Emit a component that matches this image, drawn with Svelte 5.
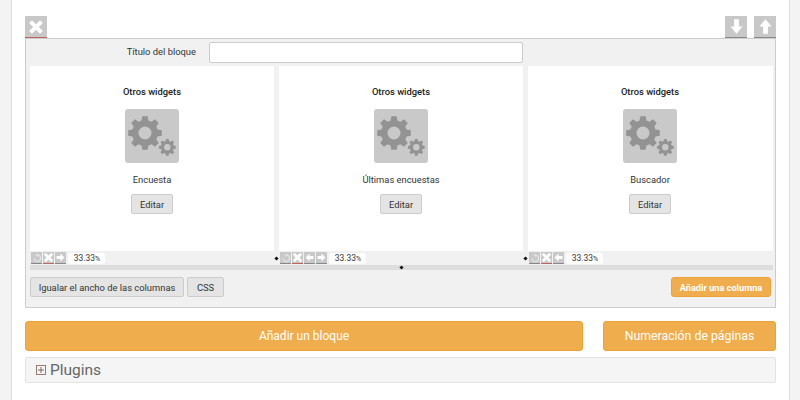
<script>
  // Page-builder block editor: one block with three widget columns.
  const columns = [
    { name: 'Encuesta', tools: ['undo', 'close', 'right'], dot: false },
    { name: 'Últimas encuestas', tools: ['undo', 'close', 'left', 'right'], dot: true },
    { name: 'Buscador', tools: ['undo', 'close', 'left'], dot: true }
  ];

  const arrows = {
    right: 'M2 5h5V2l5 5-5 5V9H2z',
    left: 'M12 5H7V2L2 7l5 5V9h5z',
    down: 'M5 1h4v6h3l-5 6-5-6h3z',
    up: 'M5 13h4V7h3L7 1 2 7h3z'
  };

  // Gear outline: teeth around a ring, with the hole cut by evenodd.
  function gear(cx, cy, outer, inner, hole, teeth) {
    let d = '';
    const step = (Math.PI * 2) / teeth;
    for (let i = 0; i < teeth; i++) {
      const a = i * step - Math.PI / 2;
      const pts = [
        [inner, a - step * 0.34],
        [outer, a - step * 0.2],
        [outer, a + step * 0.2],
        [inner, a + step * 0.34]
      ];
      for (const [r, t] of pts) {
        const x = (cx + r * Math.cos(t)).toFixed(2);
        const y = (cy + r * Math.sin(t)).toFixed(2);
        d += (d ? 'L' : 'M') + x + ' ' + y;
      }
    }
    d += `ZM${cx - hole} ${cy}a${hole} ${hole} 0 1 0 ${hole * 2} 0a${hole} ${hole} 0 1 0 ${-hole * 2} 0Z`;
    return d;
  }
  const gearPath = gear(20, 24, 17, 13, 6.5, 8) + gear(42.3, 38.3, 8.5, 6.5, 3.2, 8);
</script>

{#snippet xIcon(size)}
  <svg width={size} height={size} viewBox="0 0 14 14" aria-hidden="true">
    <path d="M1 3.5 3.5 1 7 4.5 10.500 1 13 3.500 9.500 7 13 10.500 10.500 13 7 9.500 3.500 13 1 10.500 4.500 7z" fill="#fff" />
  </svg>
{/snippet}

{#snippet arrow(name, size)}
  <svg width={size} height={size} viewBox="0 0 14 14" aria-hidden="true">
    <path d={arrows[name]} fill="#fff" />
  </svg>
{/snippet}

<div class="page">
  <main class="content">
    <div class="block-tools">
      <button class="tool danger">{@render xIcon(16)}</button>
      <div class="move">
        <button class="tool">{@render arrow('down', 17)}</button>
        <button class="tool">{@render arrow('up', 17)}</button>
      </div>
    </div>

    <section class="block">
      <div class="title-row">
        <label for="block-title">Título del bloque</label>
        <input id="block-title" type="text" />
      </div>

      <div class="columns">
        {#each columns as col}
          <div class="column">
            <div class="widget">
              <h4>Otros widgets</h4>
              <div class="widget-icon">
                <svg width="54" height="54" viewBox="0 0 54 54" aria-hidden="true">
                  <path d={gearPath} fill="#939393" fill-rule="evenodd" />
                </svg>
              </div>
              <p>{col.name}</p>
              <button class="edit">Editar</button>
            </div>
            <div class="col-tools">
              {#if col.dot}<span class="dot"></span>{/if}
              {#each col.tools as t}
                <span class="mini" class:danger={t === 'close'}>
                  {#if t === 'close'}
                    {@render xIcon(11)}
                  {:else if t === 'undo'}
                    <svg width="10" height="10" viewBox="0 0 14 14" aria-hidden="true">
                      <path d="M8 3A4.500 4.500 0 1 1 3 7.500" fill="none" stroke="#e6e6e6" stroke-width="1.600" />
                      <path d="M8 0.500v5L5 3z" fill="#e6e6e6" />
                    </svg>
                  {:else}
                    {@render arrow(t, 11)}
                  {/if}
                </span>
              {/each}
              <span class="width">33.33<small>%</small></span>
            </div>
          </div>
        {/each}
      </div>

      <div class="slider"><span class="dot"></span></div>

      <div class="actions">
        <button class="plain equalize">Igualar el ancho de las columnas</button>
        <button class="plain css">CSS</button>
        <button class="orange small">Añadir una columna</button>
      </div>
    </section>

    <div class="main-actions">
      <button class="orange big grow">Añadir un bloque</button>
      <button class="orange big pages">Numeración de páginas</button>
    </div>

    <div class="plugins">
      <svg width="10" height="10" viewBox="0 0 10 10" aria-hidden="true">
        <rect x="0.5" y="0.5" width="9" height="9" fill="none" stroke="#9a7a6c" />
        <path d="M2 5h6M5 2v6" stroke="#7a6a64" />
      </svg>
      <span>Plugins</span>
    </div>
  </main>
</div>

<style>
  :global(body) {
    margin: 0;
    background: #f3f3f3;
    font-family: Roboto, "Liberation Sans", Arial, sans-serif;
  }

  .page {
    width: 800px;
    height: 400px;
    overflow: hidden;
    box-sizing: border-box;
    padding: 0 10px 0 11px;
  }

  .content {
    height: 400px;
    box-sizing: border-box;
    background: #fff;
    border-left: 1px solid #ddd;
    border-right: 1px solid #ddd;
    padding: 16px 13px 0 13px;
  }

  button {
    font-family: inherit;
    cursor: pointer;
  }

  .block-tools {
    display: flex;
    justify-content: space-between;
  }

  .move {
    display: flex;
    gap: 7px;
  }

  .tool {
    width: 22px;
    height: 22px;
    padding: 0;
    border: 0;
    border-bottom: 1px solid #888;
    background: #c8c8c8;
    display: flex;
    align-items: center;
    justify-content: center;
  }

  .tool.danger {
    border-bottom-color: #c0635c;
  }

  .block {
    height: 270px;
    box-sizing: border-box;
    border: 1px solid #ccc;
    background: #f1f1f1;
    padding: 0 2px 0 4px;
    display: flex;
    flex-direction: column;
  }

  .title-row {
    height: 27px;
    display: flex;
    align-items: flex-start;
    padding-top: 3px;
    box-sizing: border-box;
  }

  .title-row label {
    width: 166px;
    text-align: right;
    font-size: 9.400px;
    line-height: 19px;
    color: #333;
  }

  .title-row input {
    margin-left: 13px;
    width: 314px;
    height: 21px;
    box-sizing: border-box;
    border: 1px solid #ccc;
    border-radius: 2px;
    background: #fff;
    padding: 0;
  }

  .columns {
    display: grid;
    grid-template-columns: 244px 244px 245px;
    gap: 5px;
  }

  .column {
    display: flex;
    flex-direction: column;
  }

  .widget {
    height: 185px;
    background: #fff;
    display: flex;
    flex-direction: column;
    align-items: center;
  }

  .column:last-child .widget {
    padding-right: 1px;
  }

  .widget h4 {
    margin: 19px 0 0;
    font-size: 9.400px;
    line-height: 14px;
    font-weight: 500;
    color: #222;
  }

  .widget-icon {
    margin-top: 10px;
    width: 54px;
    height: 54px;
    border-radius: 3px;
    background: #c9c9c9;
  }

  .widget p {
    margin: 10px 0 0;
    font-size: 9.400px;
    line-height: 14px;
    color: #333;
  }

  .edit {
    margin-top: 7px;
    width: 42px;
    height: 20px;
    padding: 0;
    border: 1px solid #ccc;
    border-radius: 2px;
    background: #e4e4e4;
    font-size: 9.400px;
    color: #333;
  }

  .col-tools {
    height: 14px;
    display: flex;
    align-items: center;
    gap: 1px;
    padding-left: 1px;
    position: relative;
  }

  .col-tools .dot {
    position: absolute;
    left: -4px;
    top: 6px;
  }

  .dot {
    width: 3px;
    height: 3px;
    background: #111;
    transform: rotate(45deg);
    display: block;
  }

  .mini {
    width: 11px;
    height: 11px;
    background: #c8c8c8;
    border-bottom: 1px solid #888;
    display: flex;
    align-items: center;
    justify-content: center;
  }

  .mini.danger {
    border-bottom-color: #c0635c;
  }

  .width {
    margin-left: 1px;
    width: 36px;
    height: 11px;
    background: #fff;
    border-radius: 3px;
    font-size: 8.500px;
    line-height: 10px;
    text-align: center;
    color: #333;
    padding-left: 1px;
  }

  .width small {
    font-size: 7px;
  }

  .slider {
    width: 743px;
    height: 5px;
    background: #ddd;
    position: relative;
  }

  .slider .dot {
    position: absolute;
    left: 370px;
    top: 1px;
  }

  .actions {
    margin-top: 7px;
    display: flex;
    gap: 3px;
  }

  .plain {
    height: 20px;
    padding: 0;
    border: 1px solid #ccc;
    border-radius: 2px;
    background: #e4e4e4;
    font-size: 9.400px;
    color: #333;
  }

  .equalize {
    width: 154px;
  }

  .css {
    width: 37px;
  }

  .orange {
    background: #f0ad4e;
    border: 1px solid #eea236;
    border-radius: 3px;
    color: #fff;
    padding: 0;
  }

  .small {
    margin-left: auto;
    width: 100px;
    height: 20px;
    font-size: 9.200px;
    font-weight: 700;
    margin-right: 2px;
  }

  .main-actions {
    margin-top: 13px;
    display: flex;
    gap: 20px;
  }

  .big {
    height: 30px;
  }

  .grow {
    width: 558px;
    font-size: 12px;
  }

  .pages {
    width: 173px;
    font-size: 12.300px;
  }

  .plugins {
    margin-top: 6px;
    width: 751px;
    height: 26px;
    box-sizing: border-box;
    border: 1px solid #e3e3e3;
    border-radius: 2px;
    background: #f5f5f5;
    display: flex;
    align-items: center;
    padding-left: 10px;
    gap: 4px;
    font-size: 15.500px;
    color: #666;
  }
</style>
